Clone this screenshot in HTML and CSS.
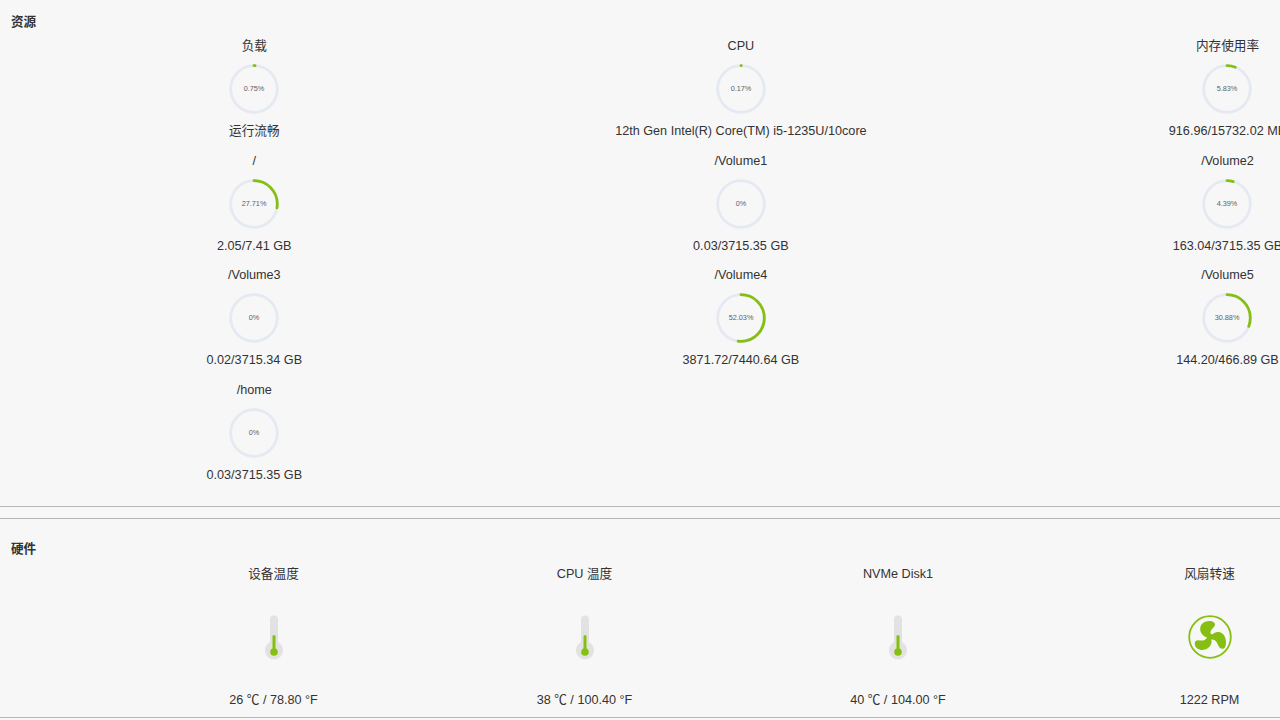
FILE: index.html
```html
<!DOCTYPE html>
<html lang="zh-CN">
<head>
  <meta charset="UTF-8">
  <meta name="viewport" content="width=device-width, initial-scale=1.0">
  <title>资源</title>
  <link rel="stylesheet" href="styles.css">
</head>
<body>

  <section class="panel resources">
    <h2>资源</h2>
    <div class="resource-grid" id="resourceGrid"></div>
  </section>

  <section class="panel hardware">
    <h2>硬件</h2>
    <div class="hardware-grid" id="hardwareGrid"></div>
  </section>

  <template id="thermometer">
    <svg class="thermometer" viewBox="0 0 20 46">
      <path class="glass" d="M6 5.5a4 4 0 0 1 8 0v22.7a9 9 0 1 1-8 0z"/>
      <path class="mercury-line" d="M10 22.5v14"/>
      <circle class="mercury" cx="10" cy="38" r="3.8"/>
    </svg>
  </template>

  <template id="fan">
    <svg class="fan" viewBox="0 0 44 44">
      <circle class="fan-ring" cx="22" cy="22" r="20.8"/>
      <path d="M19 22.5C15.5 21.5 12 18 12.2 13.5C12.5 8.5 17 5.8 21.5 5.9C25.5 6 27.7 8 26.8 10.5C25.5 13.5 22 14.5 22.5 18.5L24.3 19.5C26 17.5 28.5 16.6 31 17C36 18 38.3 23 38 28C37.8 32 36.5 34.3 34 33.8C29.5 32.5 30 27 26.5 25C25.5 24.4 24.5 24.3 23.3 24.5C24.5 29 21.5 33.3 17 34.6C12 36 7.5 33.5 6.8 29.5C6.5 27 7.5 25.3 10 25.3C13.5 25.5 17 26.3 19 22.5Z"/>
    </svg>
  </template>

  <script src="script.js"></script>
</body>
</html>
```
FILE: styles.css
```css
* {
  box-sizing: border-box;
}
body {
  margin: 0;
  height: 720px;
  overflow: hidden;
  background: #f7f7f7;
  color: #333;
  font-family: "Liberation Sans", Arial, "Noto Sans CJK SC", sans-serif;
  font-size: 12.65px;
  line-height: 20px;
}
.panel {
  padding-left: 11px;
  border-bottom: 1px solid #b5b5b5;
}
.resources {
  height: 507px;
  padding-top: 12px;
}
.hardware {
  height: 200px;
  margin-top: 11px;
  padding-top: 20px;
  border-top: 1px solid #b5b5b5;
}
h2 {
  margin: 0;
  font-size: 12.6px;
  line-height: 20px;
}
.resource-grid {
  display: grid;
  grid-template-columns: repeat(3, 486.6px);
  grid-auto-rows: 114.7px;
  padding-top: 4px;
}
.hardware-grid {
  display: grid;
  grid-template-columns: 311px 311px 316px 307px;
  padding: 5px 0 0 107px;
}
.item {
  display: flex;
  flex-direction: column;
  align-items: center;
  white-space: nowrap;
}
.ring {
  width: 50px;
  height: 50px;
  margin: 8px 0 7px;
}
.track,
.value {
  fill: none;
  stroke: #e5e9f2;
  stroke-width: 2.8;
}
.value {
  stroke: #85bf13;
  stroke-linecap: round;
}
.ring text {
  fill: #606266;
  font-size: 7.3px;
  text-anchor: middle;
}
.icon {
  display: flex;
  align-items: center;
  justify-content: center;
  height: 106px;
}
.thermometer {
  width: 20px;
  height: 46px;
}
.glass {
  fill: #e2e2e2;
}
.mercury-line {
  stroke: #85bf13;
  stroke-width: 3;
  stroke-linecap: round;
}
.mercury,
.fan {
  fill: #85bf13;
}
.fan {
  width: 44px;
  height: 44px;
}
.fan-ring {
  fill: none;
  stroke: #85bf13;
  stroke-width: 1.8;
}
```
FILE: script.js
```js
const resources = [
  ['负载', 0.75, '运行流畅'],
  ['CPU', 0.17, '12th Gen Intel(R) Core(TM) i5-1235U/10core'],
  ['内存使用率', 5.83, '916.96/15732.02 MB'],
  ['/', 27.71, '2.05/7.41 GB'],
  ['/Volume1', 0, '0.03/3715.35 GB'],
  ['/Volume2', 4.39, '163.04/3715.35 GB'],
  ['/Volume3', 0, '0.02/3715.34 GB'],
  ['/Volume4', 52.03, '3871.72/7440.64 GB'],
  ['/Volume5', 30.88, '144.20/466.89 GB'],
  ['/home', 0, '0.03/3715.35 GB']
];

const hardware = [
  ['设备温度', 'thermometer', '26 ℃ / 78.80 °F'],
  ['CPU 温度', 'thermometer', '38 ℃ / 100.40 °F'],
  ['NVMe Disk1', 'thermometer', '40 ℃ / 104.00 °F'],
  ['风扇转速', 'fan', '1222 RPM']
];

// Progress ring, starts at 12 o'clock
function ring(percent) {
  const value = percent > 0
    ? `<circle class="value" cx="25" cy="25" r="23.3" pathLength="100"
        stroke-dasharray="${percent} 100" transform="rotate(-90 25 25)"/>`
    : '';
  return `<svg class="ring" viewBox="0 0 50 50">
    <circle class="track" cx="25" cy="25" r="23.3"/>${value}
    <text x="25" y="27.3">${percent}%</text>
  </svg>`;
}

document.getElementById('resourceGrid').innerHTML = resources
  .map(([name, percent, detail]) =>
    `<div class="item"><span>${name}</span>${ring(percent)}<span>${detail}</span></div>`)
  .join('');

document.getElementById('hardwareGrid').innerHTML = hardware
  .map(([name, icon, detail]) =>
    `<div class="item"><span>${name}</span>
      <div class="icon">${document.getElementById(icon).innerHTML}</div>
      <span>${detail}</span></div>`)
  .join('');
```
